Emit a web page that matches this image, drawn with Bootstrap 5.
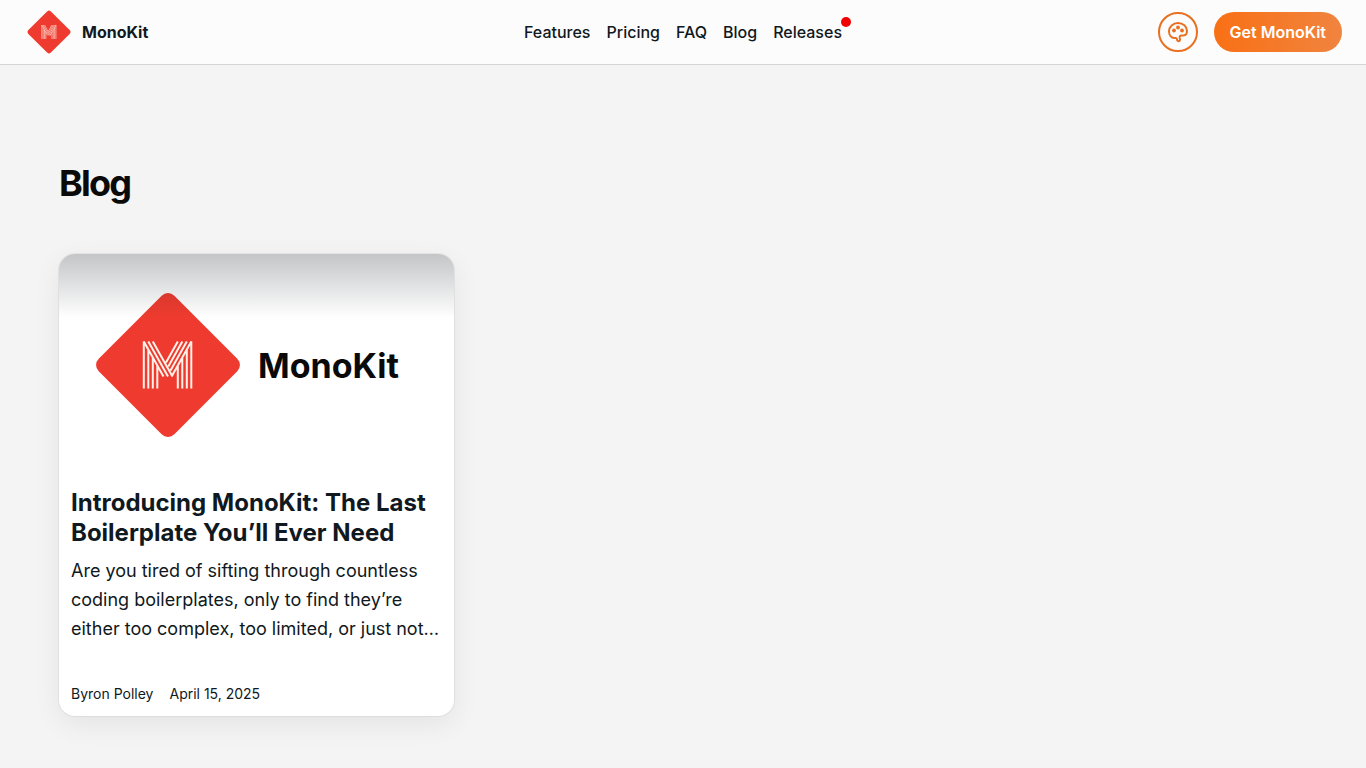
<!DOCTYPE html>
<html lang="en">
<head>
<meta charset="utf-8">
<meta name="viewport" content="width=device-width, initial-scale=1">
<title>Blog | MonoKit</title>
<link href="https://cdn.jsdelivr.net/npm/bootstrap@5.3.0/dist/css/bootstrap.min.css" rel="stylesheet">
<style>
  body { font-family: Inter, "Liberation Sans", sans-serif; background: #f4f4f4; color: #101820; }
  .site-header { min-height: 65px; background: #fcfcfc; border-bottom: 1px solid #d4d4d4; }
  .site-header .side { flex: 1 1 0; }
  .brand-link { color: #101820; font-weight: 700; }
  .brand-link svg { width: 50px; height: 50px; }
  .main-nav a { color: #101820; font-weight: 500; }
  .dot { width: 10px; height: 10px; background: #f00000; top: -3px; right: -9px; }
  .theme-btn { width: 40px; height: 40px; color: #e87020; border: 2px solid #e87020; background: transparent; }
  .cta { height: 40px; color: #fff; font-weight: 600; background: linear-gradient(90deg, #f97015, #f0843f); }
  .cta:hover { color: #fff; }
  .page { max-width: 1280px; }
  .page-title { font-size: 36px; line-height: 40px; font-weight: 700; letter-spacing: -1.8px; color: #0a0a0a; padding-top: 2px; margin: 48px 0 51px; }
  .posts { display: grid; grid-template-columns: repeat(auto-fill, minmax(320px, 1fr)); gap: 32px; }
  .post { border: 0; border-radius: 16px; box-shadow: 0 0 0 1px rgba(0,0,0,.05), 0 8px 28px rgba(0,0,0,.07); }
  .post-cover { height: 222px; padding: 0 37px; gap: 18px; }
  .post-cover svg { width: 144px; height: 144px; overflow: visible; }
  .post-cover span { font-size: 34px; font-weight: 700; color: #0a0a0a; }
  .cover-shade { height: 64px; background: linear-gradient(rgba(16,24,32,.25), rgba(16,24,32,0)); }
  .post .card-body { padding: 12px; }
  .post-title { font-size: 24px; line-height: 30px; font-weight: 700; }
  .post-text { font-size: 18px; line-height: 29px; }
  .post-meta { font-size: 14px; line-height: 20px; margin-top: 41px; }
</style>
</head>
<body>
<svg width="0" height="0" class="position-absolute" aria-hidden="true">
  <symbol id="logo" viewBox="0 0 144 144" overflow="visible">
    <rect x="18.500" y="18.500" width="107" height="107" rx="9" transform="rotate(45 72 72)" fill="#ef3b2f"/>
    <path fill="none" stroke="#fff1e8" stroke-width="2" stroke-linejoin="bevel" d="M47.800 95.500V48.500L67.500 83.500M52.300 95.500V56.500M56.800 95.500V64.500M61.300 95.500V72.500M52.300 48.500L72 83.500M56.800 48.500L76.500 83.500M95.300 95.500V48.500L75.600 83.500M90.800 95.500V56.500M86.300 95.500V64.500M81.800 95.500V72.500M90.800 48.500L74.500 77.400M86.300 48.500L72.300 73.400M81.800 48.500L70 69.500"/>
  </symbol>
</svg>

<header class="site-header d-flex align-items-center px-4">
  <div class="side d-flex">
    <a href="#" class="brand-link d-inline-flex align-items-center gap-2 text-decoration-none">
      <svg viewBox="-12 -12 168 168" aria-hidden="true"><use href="#logo" width="144" height="144"/></svg>MonoKit
    </a>
  </div>
  <nav class="main-nav d-flex gap-3" aria-label="Main">
    <a href="#" class="text-decoration-none">Features</a>
    <a href="#" class="text-decoration-none">Pricing</a>
    <a href="#" class="text-decoration-none">FAQ</a>
    <a href="#" class="text-decoration-none">Blog</a>
    <a href="#" class="text-decoration-none position-relative">Releases<span class="dot position-absolute rounded-circle"></span></a>
  </nav>
  <div class="side d-flex justify-content-end gap-3">
    <button type="button" class="theme-btn btn rounded-circle p-0 d-flex align-items-center justify-content-center" aria-label="Change theme">
      <svg width="24" height="24" viewBox="0 0 24 24" fill="none" stroke="currentColor" stroke-width="2" stroke-linejoin="round" aria-hidden="true">
        <path d="M12 3C7 3 3 6.700 3 11.300c0 3.800 2.300 6.700 5.500 6.700.9 0 1.300-.3 2 .2.800.6.200 1.600.9 2.300.6.600 1.700.7 2.300.1.800-.8.300-1.800 0-2.800-.4-1.500.6-2.400 2-2.300.6 0 1.100.1 1.700 0 2.200-.2 3.600-1.900 3.600-4.500C21 6.400 17 3 12 3z"/>
        <g fill="currentColor" stroke="none"><circle cx="8" cy="10.500" r="1.900"/><circle cx="12" cy="7.500" r="1.900"/><circle cx="16" cy="10.500" r="1.900"/></g>
      </svg>
    </button>
    <button type="button" class="cta btn rounded-pill border-0 px-3 py-0">Get MonoKit</button>
  </div>
</header>

<main class="page container-fluid px-3 py-5">
  <h1 class="page-title">Blog</h1>
  <div class="posts">
    <article class="post card overflow-hidden">
      <div class="post-cover d-flex align-items-center">
        <svg aria-hidden="true"><use href="#logo"/></svg><span>MonoKit</span>
      </div>
      <div class="cover-shade position-absolute top-0 start-0 w-100"></div>
      <div class="card-body">
        <h2 class="post-title mb-2">Introducing MonoKit: The Last Boilerplate You’ll Ever Need</h2>
        <p class="post-text mb-0">Are you tired of sifting through countless coding boilerplates, only to find they’re either too complex, too limited, or just not…</p>
        <div class="post-meta d-flex gap-3"><span>Byron Polley</span><time datetime="2025-04-15">April 15, 2025</time></div>
      </div>
    </article>
  </div>
</main>
<script src="https://cdn.jsdelivr.net/npm/bootstrap@5.3.0/dist/js/bootstrap.bundle.min.js"></script>
</body>
</html>
